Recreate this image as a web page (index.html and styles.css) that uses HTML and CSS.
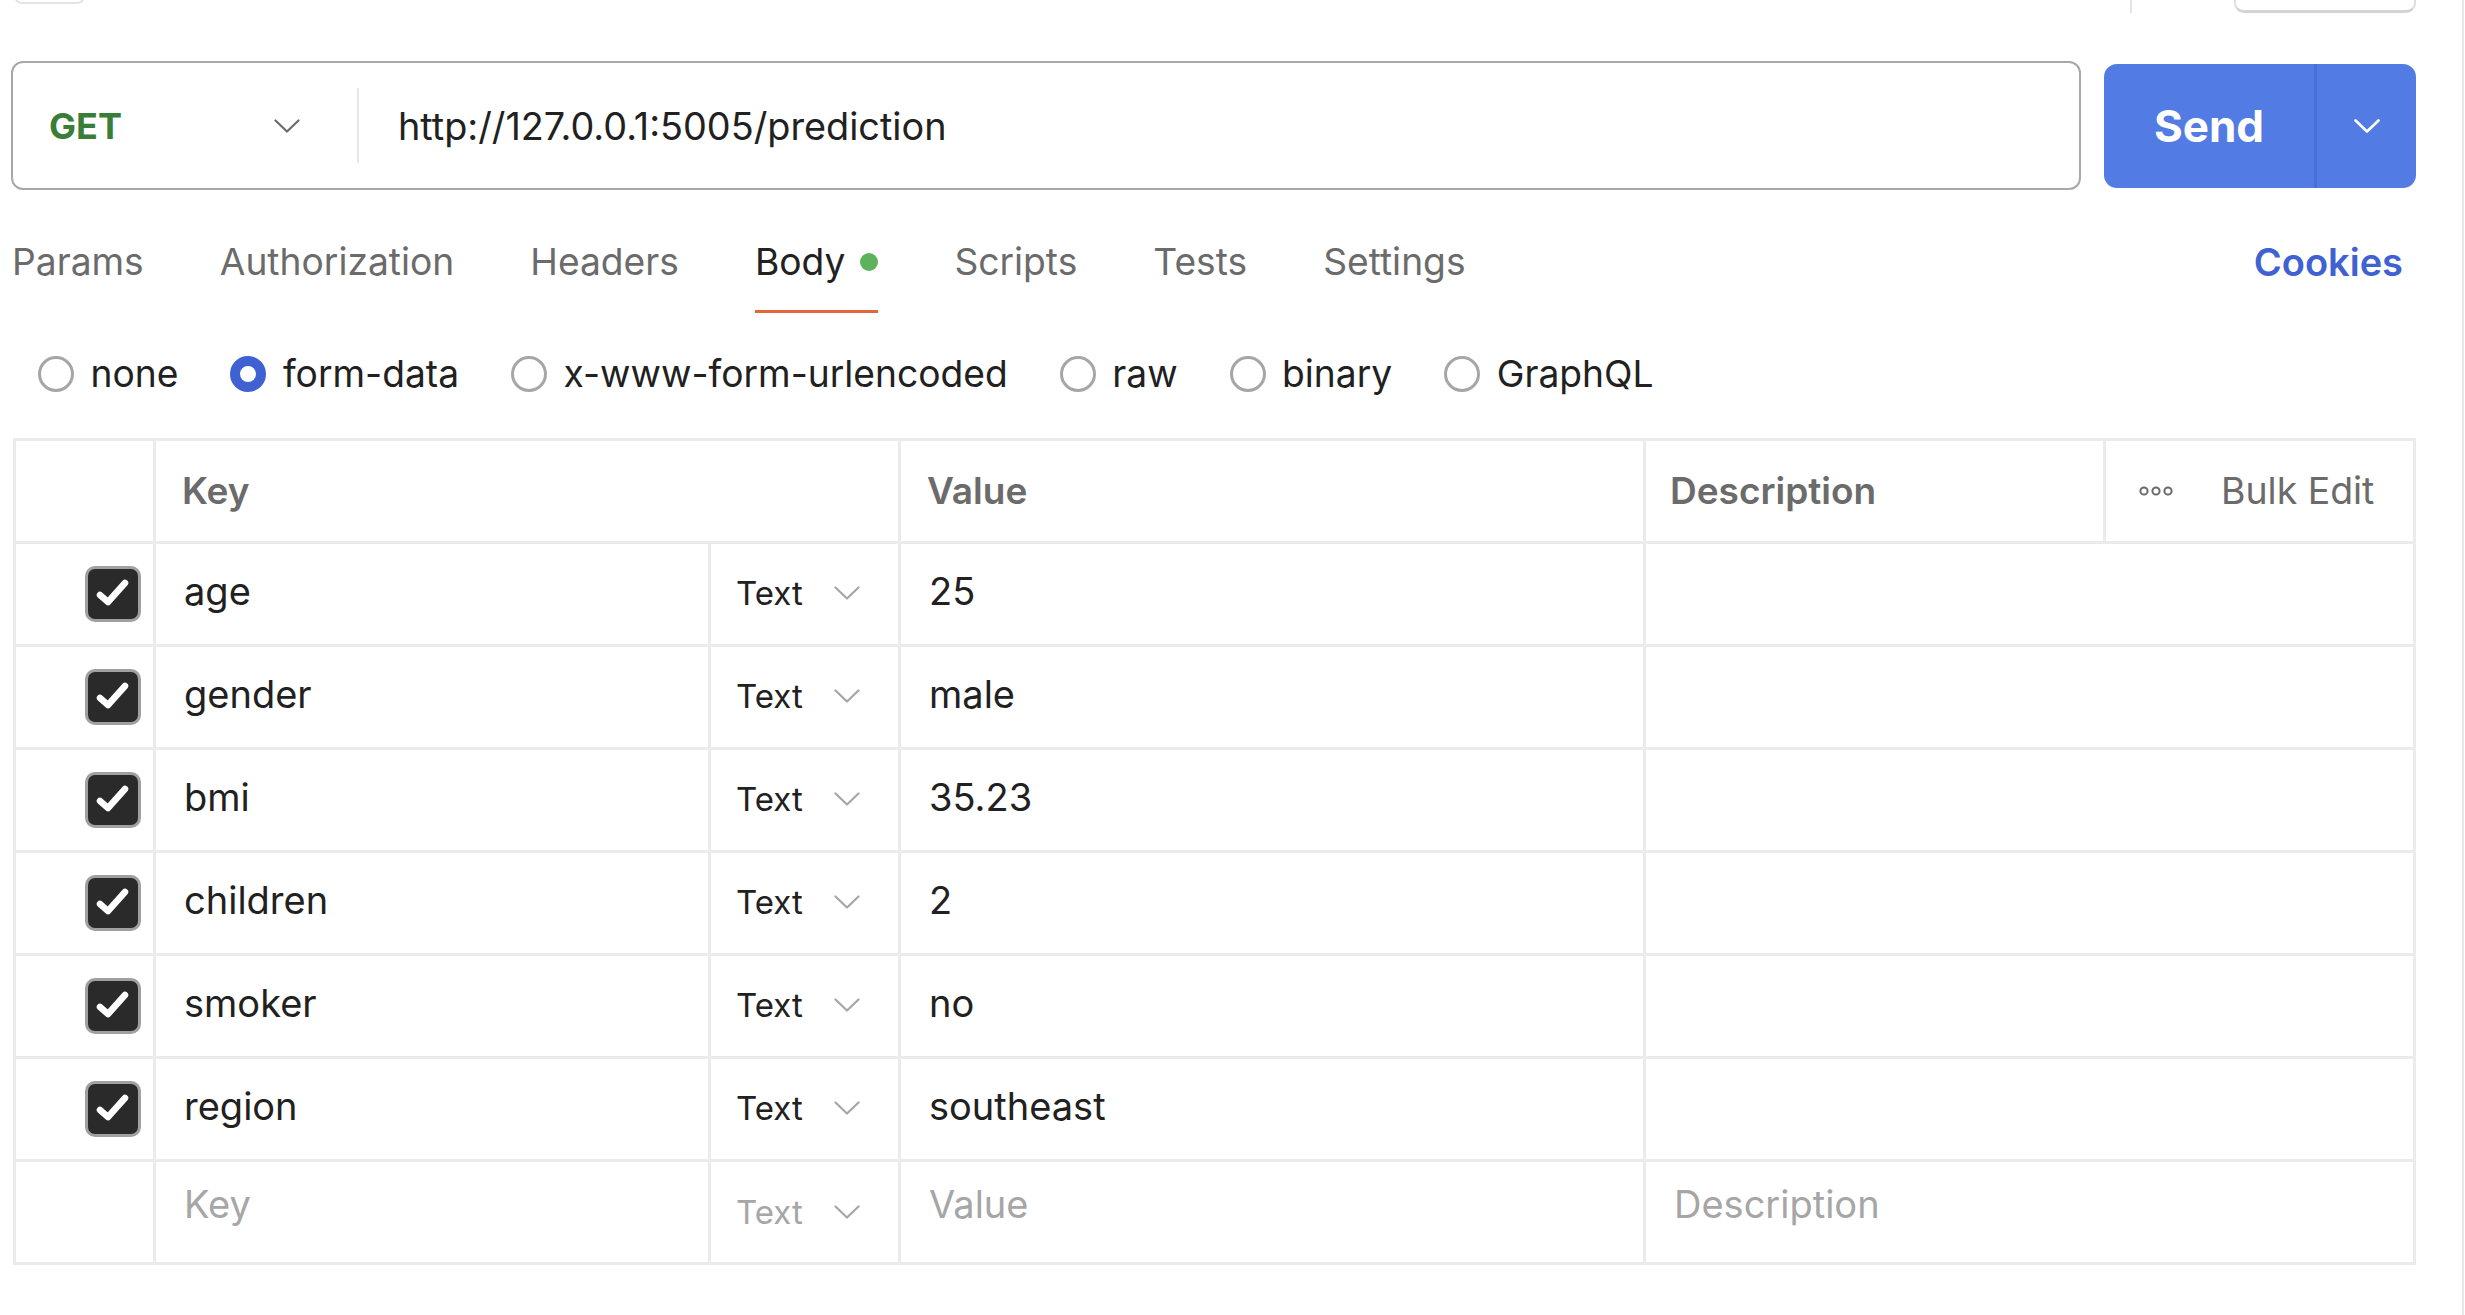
FILE: index.html
```html
<!DOCTYPE html>
<html lang="en">
<head>
<meta charset="utf-8">
<title>Request</title>
<link rel="stylesheet" href="styles.css">
</head>
<body>
<div class="page">
  <div class="main">
    <div class="topstrip">
      <div class="ts-left"></div>
      <div class="ts-spacer"></div>
      <div class="ts-sep"></div>
      <div class="ts-box"></div>
    </div>

    <div class="urlrow">
      <div class="urlbox">
        <div class="method">
          <span class="method-name">GET</span>
          <svg class="chev" viewBox="0 0 26 14" width="26" height="14"><polyline points="1.5,1.5 13,12.5 24.5,1.5" fill="none" stroke="#6b6b6b" stroke-width="2.2" stroke-linecap="round" stroke-linejoin="round"/></svg>
        </div>
        <div class="urldiv"></div>
        <div class="url">http://127.0.0.1:5005/prediction</div>
      </div>
      <div class="send">
        <div class="send-label">Send</div>
        <div class="send-sep"></div>
        <div class="send-caret">
          <svg viewBox="0 0 26 14" width="26" height="14"><polyline points="1.5,1.5 13,12.5 24.5,1.5" fill="none" stroke="#ffffff" stroke-width="2.6" stroke-linecap="round" stroke-linejoin="round"/></svg>
        </div>
      </div>
    </div>

    <div class="tabs">
      <div class="tab">Params</div>
      <div class="tab">Authorization</div>
      <div class="tab">Headers</div>
      <div class="tab active">Body<span class="dot"></span></div>
      <div class="tab">Scripts</div>
      <div class="tab">Tests</div>
      <div class="tab">Settings</div>
      <div class="tabs-spacer"></div>
      <div class="cookies">Cookies</div>
    </div>

    <div class="bodytypes">
      <div class="radio-item"><span class="radio"></span><span class="radio-label">none</span></div>
      <div class="radio-item"><span class="radio checked"></span><span class="radio-label">form-data</span></div>
      <div class="radio-item"><span class="radio"></span><span class="radio-label">x-www-form-urlencoded</span></div>
      <div class="radio-item"><span class="radio"></span><span class="radio-label">raw</span></div>
      <div class="radio-item"><span class="radio"></span><span class="radio-label">binary</span></div>
      <div class="radio-item"><span class="radio"></span><span class="radio-label">GraphQL</span></div>
    </div>

    <div class="kvtable">
      <div class="cell head"></div>
      <div class="cell head span2 head-text">Key</div>
      <div class="cell head head-text">Value</div>
      <div class="cell head head-text desc-head">Description</div>
      <div class="cell head bulk">
        <svg class="more" viewBox="0 0 34 10" width="34" height="10"><circle cx="5" cy="5" r="3.6" fill="none" stroke="#6b6b6b" stroke-width="2"/><circle cx="17" cy="5" r="3.6" fill="none" stroke="#6b6b6b" stroke-width="2"/><circle cx="29" cy="5" r="3.6" fill="none" stroke="#6b6b6b" stroke-width="2"/></svg>
        <span class="bulk-text">Bulk Edit</span>
      </div>

      <div class="cell check"><span class="cbox"><svg viewBox="0 0 50 50" width="50" height="50"><polyline points="12,26 20,33 37,14" fill="none" stroke="#fff" stroke-width="6.5" stroke-linecap="round" stroke-linejoin="round"/></svg></span></div>
      <div class="cell key">age</div>
      <div class="cell type"><span>Text</span><svg class="chev" viewBox="0 0 26 14" width="26" height="14"><polyline points="1.5,1.5 13,12.5 24.5,1.5" fill="none" stroke="#a6a6a6" stroke-width="2.2" stroke-linecap="round" stroke-linejoin="round"/></svg></div>
      <div class="cell val">25</div>
      <div class="cell desc span2"></div>

      <div class="cell check"><span class="cbox"><svg viewBox="0 0 50 50" width="50" height="50"><polyline points="12,26 20,33 37,14" fill="none" stroke="#fff" stroke-width="6.5" stroke-linecap="round" stroke-linejoin="round"/></svg></span></div>
      <div class="cell key">gender</div>
      <div class="cell type"><span>Text</span><svg class="chev" viewBox="0 0 26 14" width="26" height="14"><polyline points="1.5,1.5 13,12.5 24.5,1.5" fill="none" stroke="#a6a6a6" stroke-width="2.2" stroke-linecap="round" stroke-linejoin="round"/></svg></div>
      <div class="cell val">male</div>
      <div class="cell desc span2"></div>

      <div class="cell check"><span class="cbox"><svg viewBox="0 0 50 50" width="50" height="50"><polyline points="12,26 20,33 37,14" fill="none" stroke="#fff" stroke-width="6.5" stroke-linecap="round" stroke-linejoin="round"/></svg></span></div>
      <div class="cell key">bmi</div>
      <div class="cell type"><span>Text</span><svg class="chev" viewBox="0 0 26 14" width="26" height="14"><polyline points="1.5,1.5 13,12.5 24.5,1.5" fill="none" stroke="#a6a6a6" stroke-width="2.2" stroke-linecap="round" stroke-linejoin="round"/></svg></div>
      <div class="cell val">35.23</div>
      <div class="cell desc span2"></div>

      <div class="cell check"><span class="cbox"><svg viewBox="0 0 50 50" width="50" height="50"><polyline points="12,26 20,33 37,14" fill="none" stroke="#fff" stroke-width="6.5" stroke-linecap="round" stroke-linejoin="round"/></svg></span></div>
      <div class="cell key">children</div>
      <div class="cell type"><span>Text</span><svg class="chev" viewBox="0 0 26 14" width="26" height="14"><polyline points="1.5,1.5 13,12.5 24.5,1.5" fill="none" stroke="#a6a6a6" stroke-width="2.2" stroke-linecap="round" stroke-linejoin="round"/></svg></div>
      <div class="cell val">2</div>
      <div class="cell desc span2"></div>

      <div class="cell check"><span class="cbox"><svg viewBox="0 0 50 50" width="50" height="50"><polyline points="12,26 20,33 37,14" fill="none" stroke="#fff" stroke-width="6.5" stroke-linecap="round" stroke-linejoin="round"/></svg></span></div>
      <div class="cell key">smoker</div>
      <div class="cell type"><span>Text</span><svg class="chev" viewBox="0 0 26 14" width="26" height="14"><polyline points="1.5,1.5 13,12.5 24.5,1.5" fill="none" stroke="#a6a6a6" stroke-width="2.2" stroke-linecap="round" stroke-linejoin="round"/></svg></div>
      <div class="cell val">no</div>
      <div class="cell desc span2"></div>

      <div class="cell check"><span class="cbox"><svg viewBox="0 0 50 50" width="50" height="50"><polyline points="12,26 20,33 37,14" fill="none" stroke="#fff" stroke-width="6.5" stroke-linecap="round" stroke-linejoin="round"/></svg></span></div>
      <div class="cell key">region</div>
      <div class="cell type"><span>Text</span><svg class="chev" viewBox="0 0 26 14" width="26" height="14"><polyline points="1.5,1.5 13,12.5 24.5,1.5" fill="none" stroke="#a6a6a6" stroke-width="2.2" stroke-linecap="round" stroke-linejoin="round"/></svg></div>
      <div class="cell val">southeast</div>
      <div class="cell desc span2"></div>

      <div class="cell check"></div>
      <div class="cell key ph">Key</div>
      <div class="cell type ph"><span>Text</span><svg class="chev" viewBox="0 0 26 14" width="26" height="14"><polyline points="1.5,1.5 13,12.5 24.5,1.5" fill="none" stroke="#a6a6a6" stroke-width="2.2" stroke-linecap="round" stroke-linejoin="round"/></svg></div>
      <div class="cell val ph">Value</div>
      <div class="cell desc span2 ph">Description</div>
    </div>
  </div>
</div>
</body>
</html>
```

FILE: styles.css
```css
html, body {
  margin: 0;
  padding: 0;
  background: #ffffff;
}

body {
  font-family: Inter, "Noto Sans", "Liberation Sans", sans-serif;
  color: #212121;
}

.page {
  display: flex;
  min-height: 100vh;
}

.main {
  width: 2464px;
  min-height: 100vh;
  box-sizing: border-box;
  border-right: 2px solid #e8e8e8;
  padding-right: 46px;
}

/* remnants of the toolbar above */
.topstrip {
  height: 13px;
  display: flex;
  align-items: flex-end;
  overflow: hidden;
}

.ts-left {
  margin-left: 14px;
  margin-bottom: 9px;
  width: 71px;
  height: 30px;
  flex: none;
  box-sizing: border-box;
  border: 2px solid #e3e3e3;
  border-radius: 8px;
}

.ts-spacer {
  flex: 1;
}

.ts-sep {
  width: 2px;
  height: 13px;
  background: #e3e3e3;
  margin-right: 102px;
  flex: none;
}

.ts-box {
  width: 182px;
  height: 30px;
  flex: none;
  box-sizing: border-box;
  border: 2px solid #dedede;
  border-bottom-width: 3px;
  border-bottom-color: #d4d4d4;
  border-radius: 10px;
}

/* URL row */
.urlrow {
  display: flex;
  align-items: center;
  gap: 23px;
  margin-top: 48px;
  padding-left: 11px;
}

.urlbox {
  flex: 1;
  height: 129px;
  box-sizing: border-box;
  border: 2px solid #a8a8a8;
  border-radius: 12px;
  display: flex;
  align-items: center;
}

.method {
  width: 344px;
  box-sizing: border-box;
  padding: 0 57px 0 36px;
  display: flex;
  align-items: center;
  justify-content: space-between;
  flex: none;
}

.method-name {
  font-size: 36px;
  font-weight: 700;
  color: #3a7d38;
  line-height: 44px;
}

.chev {
  display: block;
  flex: none;
}

.urldiv {
  width: 2px;
  height: 75px;
  background: #e6e6e6;
  flex: none;
}

.url {
  padding-left: 39px;
  font-size: 37.8px;
  line-height: 44px;
  color: #212121;
}

.send {
  width: 312px;
  height: 124px;
  flex: none;
  display: flex;
  border-radius: 13px;
  background: #527ce4;
  overflow: hidden;
}

.send-label {
  width: 210px;
  display: flex;
  align-items: center;
  justify-content: center;
  color: #ffffff;
  font-size: 44px;
  font-weight: 700;
}

.send-sep {
  width: 3px;
  background: #4a70d8;
}

.send-caret {
  flex: 1;
  display: flex;
  align-items: center;
  justify-content: center;
}

/* tabs */
.tabs {
  display: flex;
  align-items: flex-end;
  gap: 76px;
  margin-top: 49px;
  padding-left: 12px;
  padding-right: 13px;
}

.tab {
  font-size: 37.2px;
  line-height: 46px;
  color: #6b6b6b;
  padding-bottom: 25px;
  border-bottom: 3px solid transparent;
  display: flex;
  align-items: center;
}

.tab.active {
  color: #212121;
  border-bottom-color: #e0693c;
}

.dot {
  width: 18px;
  height: 18px;
  border-radius: 50%;
  background: #5cb35c;
  margin-left: 15px;
}

.tabs-spacer {
  flex: 1;
}

.cookies {
  font-size: 38px;
  line-height: 46px;
  font-weight: 600;
  color: #3f61d1;
  padding-bottom: 28px;
}

/* body type radios */
.bodytypes {
  display: flex;
  align-items: center;
  gap: 52px;
  margin-top: 38px;
  padding-left: 38px;
  height: 46px;
}

.radio-item {
  display: flex;
  align-items: center;
  gap: 16.5px;
}

.radio {
  width: 36px;
  height: 36px;
  box-sizing: border-box;
  border-radius: 50%;
  border: 3px solid #a6a6a6;
  flex: none;
}

.radio.checked {
  border: 10px solid #3f61d1;
}

.radio-label {
  font-size: 37.2px;
  line-height: 46px;
  color: #212121;
}

/* key value table */
.kvtable {
  margin-top: 41px;
  margin-left: 13px;
  width: 2403px;
  box-sizing: border-box;
  border-left: 3px solid #ebebeb;
  border-top: 3px solid #ebebeb;
  display: grid;
  grid-template-columns: 140px 555px 190px 745px 460px 310px;
  grid-auto-rows: 103px;
}

.cell {
  box-sizing: border-box;
  border-right: 3px solid #ebebeb;
  border-bottom: 3px solid #ebebeb;
  display: flex;
  align-items: center;
  font-size: 38px;
  line-height: 46px;
  color: #212121;
  min-width: 0;
}

.span2 {
  grid-column: span 2;
}

.head-text {
  font-size: 37px;
  font-weight: 600;
  color: #6b6b6b;
  padding-left: 26px;
}

.desc-head {
  padding-left: 24px;
}

.bulk {
  padding-left: 33px;
  gap: 48px;
}

.more {
  display: block;
}

.bulk-text {
  font-size: 37.4px;
  color: #6b6b6b;
}

.check {
  justify-content: flex-end;
  padding-right: 12px;
}

.cbox {
  width: 56px;
  height: 56px;
  box-sizing: border-box;
  border: 3px solid #a0a0a0;
  border-radius: 10px;
  background: #2a2a2a;
  display: flex;
  align-items: center;
  justify-content: center;
}

.cbox svg {
  display: block;
}

.key,
.val {
  padding-left: 28px;
  padding-bottom: 6px;
}

.desc {
  padding-left: 28px;
}

.type {
  padding-left: 25px;
  padding-bottom: 2px;
  gap: 31px;
  font-size: 33px;
}

.ph {
  color: #a6a6a6;
}

.key.ph,
.val.ph,
.desc.ph {
  padding-bottom: 16px;
}

.type.ph {
  padding-bottom: 0;
}
```
